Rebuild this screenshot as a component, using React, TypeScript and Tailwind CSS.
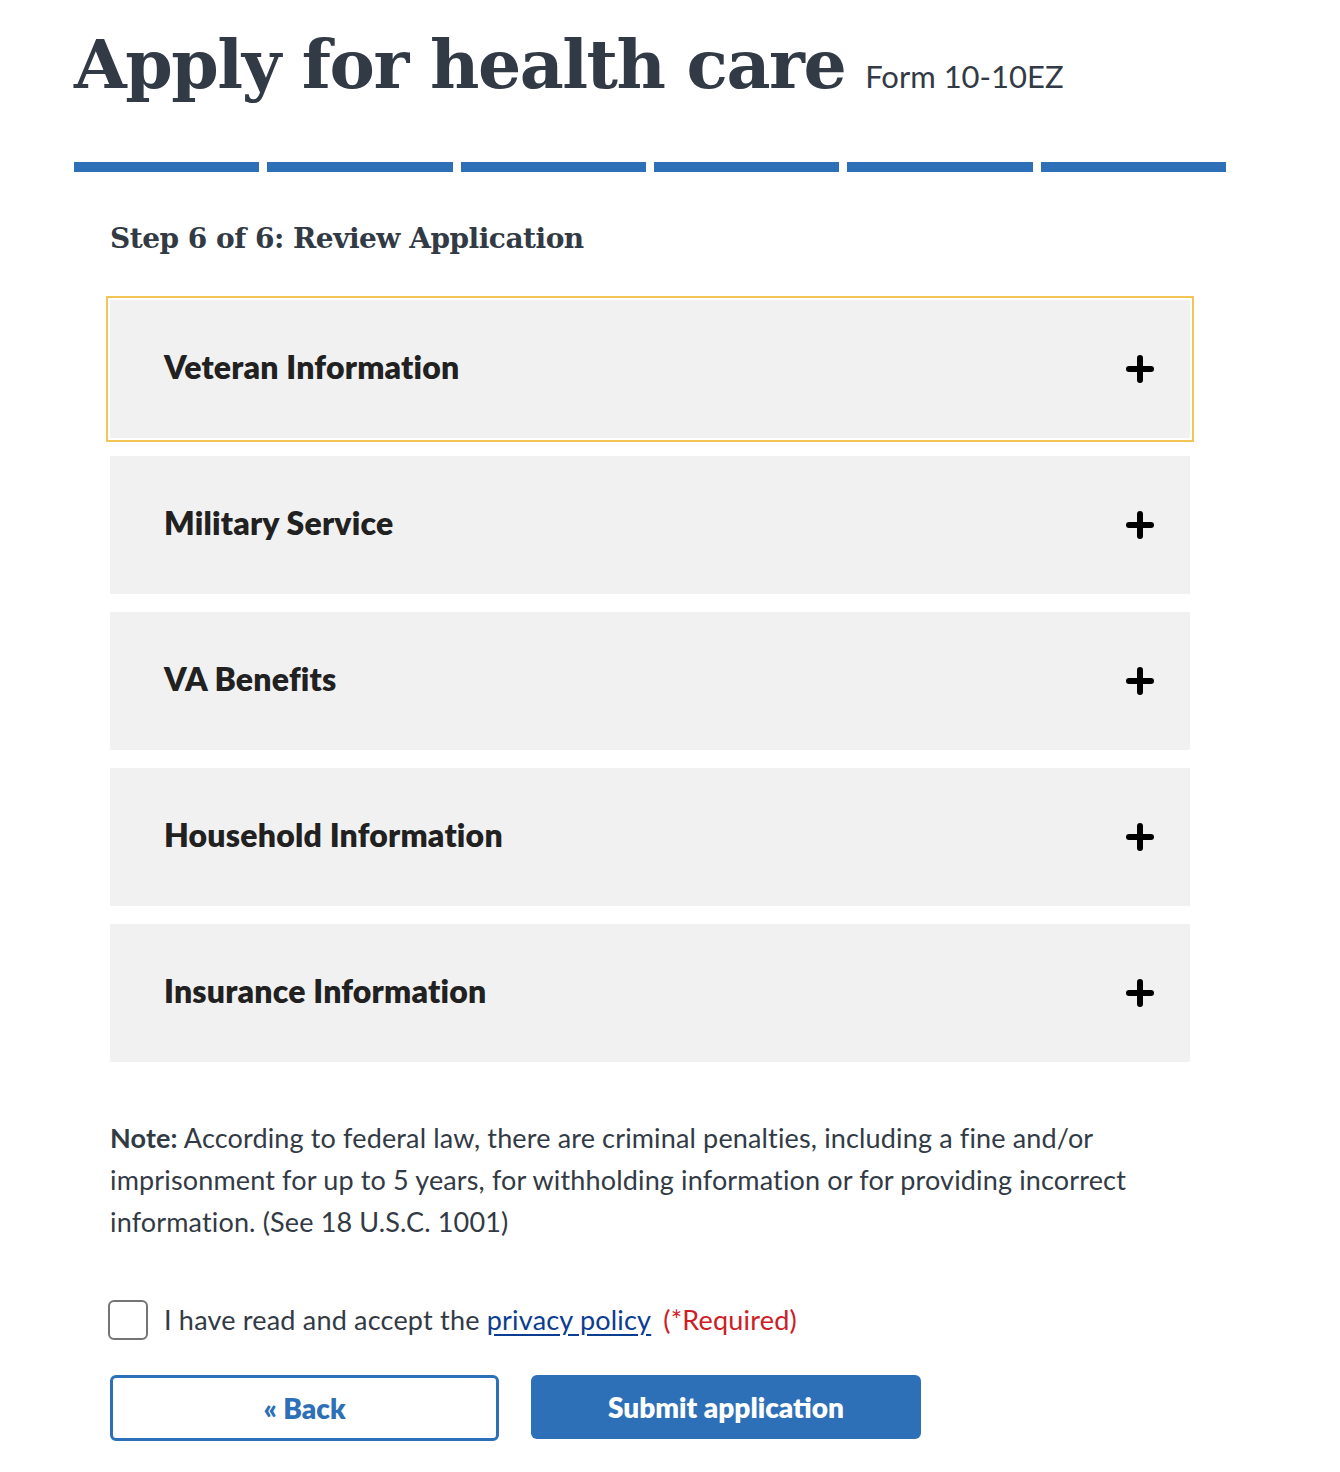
import React, { useState } from 'react'

const sections = [
  'Veteran Information',
  'Military Service',
  'VA Benefits',
  'Household Information',
  'Insurance Information',
]

const sans = { fontFamily: 'Lato, "Open Sans", sans-serif' }
const slab = { fontFamily: '"DejaVu Serif", "Liberation Serif", serif' }

function PlusIcon() {
  return (
    <svg width="28" height="28" viewBox="0 0 28 28" className="shrink-0">
      <path d="M14 3v22M3 14h22" stroke="#000" strokeWidth="6" strokeLinecap="round" />
    </svg>
  )
}

export default function App() {
  const [checked, setChecked] = useState(false)

  return (
    <div className="min-h-[1472px] bg-white pl-[74px] pt-[22px] text-[#323a45]" style={sans}>
      {/* Header */}
      <div className="flex items-baseline gap-5">
        <h1 className="text-[68px] font-bold leading-[84px] tracking-[-1.5px]" style={slab}>
          Apply for health care
        </h1>
        <span className="text-[31px]">Form 10-10EZ</span>
      </div>

      {/* Progress */}
      <div className="mt-[56px] flex w-[1152px] gap-2">
        {[0, 1, 2, 3, 4, 5].map(i => (
          <div key={i} className="h-[10px] flex-1 bg-[#2e70b7]" />
        ))}
      </div>

      <div className="w-[1080px] ml-9">
        <h2 className="mt-[49px] text-[28px] font-bold leading-[36px] tracking-[-0.5px]" style={slab}>
          Step 6 of 6: Review Application
        </h2>

        {/* Accordions */}
        <div className="mt-[43px] flex flex-col gap-[18px]">
          {sections.map((s, i) => (
            <button
              key={s}
              className={
                'flex h-[138px] w-full items-center justify-between bg-[#f1f1f1] pl-[54px] pr-[36px] text-left ' +
                (i === 0 ? 'outline-2 outline-offset-2 outline-[#f2c554]' : '')
              }
            >
              <span className="-mt-1 text-[32px] font-extrabold tracking-[0.2px] text-[#212121]">{s}</span>
              <PlusIcon />
            </button>
          ))}
        </div>

        {/* Note */}
        <p className="mt-[55px] text-[27px] leading-[42px] tracking-[0.15px] text-[#323a45]">
          <strong>Note:</strong> According to federal law, there are criminal penalties, including a fine and/or
          <br />
          imprisonment for up to 5 years, for withholding information or for providing incorrect
          <br />
          information. (See 18 U.S.C. 1001)
        </p>

        {/* Privacy */}
        <label className="mt-[57px] -ml-[2px] flex items-center gap-4 text-[27px] tracking-[0.2px]">
          <span
            onClick={() => setChecked(!checked)}
            className="flex h-[40px] w-[40px] items-center justify-center rounded-md border-2 border-[#757575] bg-white"
          >
            {checked && <span className="text-[#2e70b7]">✓</span>}
          </span>
          <span>
            I have read and accept the{' '}
            <a href="#" className="text-[#0b3d91] underline underline-offset-4">privacy policy</a>
            <span className="ml-3 text-[#cd2026]">(*Required)</span>
          </span>
        </label>

        {/* Buttons */}
        <div className="mt-[34px] flex items-start gap-8">
          <button className="flex h-[66px] w-[389px] items-center justify-center rounded-md border-[3px] border-[#2e70b7] bg-white text-[28px] font-extrabold text-[#2e70b7]">
            « Back
          </button>
          <button className="flex h-[64px] w-[390px] items-center justify-center rounded-md bg-[#2e70b7] text-[28px] font-extrabold text-white">
            Submit application
          </button>
        </div>
      </div>
    </div>
  )
}
